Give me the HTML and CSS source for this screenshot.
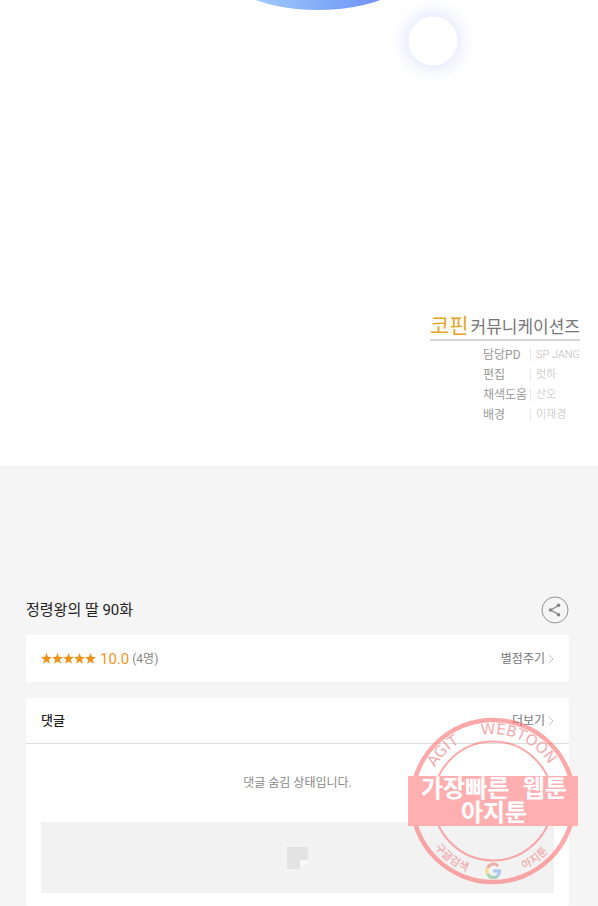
FILE: index.html
```html
<!DOCTYPE html>
<html lang="ko">
<head>
<meta charset="utf-8">
<meta name="viewport" content="width=device-width, initial-scale=1">
<title>정령왕의 딸 90화</title>
<link rel="stylesheet" href="styles.css">
</head>
<body>
<section class="episode">
  <svg class="art" viewBox="0 0 598 90" preserveAspectRatio="xMidYMin meet" aria-hidden="true">
    <defs>
      <linearGradient id="ball" x1="0.15" x2="0.85" y1="0" y2="0">
        <stop offset="0" stop-color="#a5ccfb"/>
        <stop offset="0.55" stop-color="#7fabf8"/>
        <stop offset="1" stop-color="#7390f6"/>
      </linearGradient>
      <radialGradient id="glow">
        <stop offset="0.58" stop-color="#eceffe"/>
        <stop offset="0.75" stop-color="#f7f8fe"/>
        <stop offset="1" stop-color="#ffffff"/>
      </radialGradient>
    </defs>
    <ellipse cx="318" cy="-30" rx="94" ry="40" fill="url(#ball)"/>
    <circle cx="433" cy="41" r="42" fill="url(#glow)"/>
    <circle cx="433" cy="41" r="24.5" fill="#fff"/>
  </svg>
  <div class="credits">
    <p class="studio"><strong>코핀</strong><span>커뮤니케이션즈</span></p>
    <dl class="staff">
      <dt>담당PD</dt><dd>SP JANG</dd>
      <dt>편집</dt><dd>럿하</dd>
      <dt>채색도움</dt><dd>산오</dd>
      <dt>배경</dt><dd>이재경</dd>
    </dl>
  </div>
</section>

<main class="viewer-end">
  <header class="title-row">
    <h1>정령왕의 딸 90화</h1>
    <button class="share" type="button" aria-label="공유">
      <svg viewBox="0 0 28 28" aria-hidden="true">
        <circle cx="14" cy="14" r="13" fill="none" stroke="#929292"/>
        <path d="M18 9.500 9.500 14l8.500 4.500" fill="none" stroke="#858585" stroke-width="1.2"/>
        <circle cx="17.500" cy="9.300" r="1.800" fill="#858585"/>
        <circle cx="9.500" cy="14" r="1.800" fill="#858585"/>
        <circle cx="17.500" cy="18.700" r="1.800" fill="#858585"/>
      </svg>
    </button>
  </header>

  <section class="card rating">
    <svg class="stars" viewBox="0 0 55 11" aria-hidden="true">
      <defs><path id="star" d="M5.5 0 7 3.8l4 .3-3.1 2.6 1 4L5.5 8.500 2.100 10.700l1-4L0 4.100l4-.3z"/></defs>
      <g fill="#ee951c"><use href="#star"/><use href="#star" x="11"/><use href="#star" x="22"/><use href="#star" x="33"/><use href="#star" x="44"/></g>
    </svg>
    <span class="score">10.0</span>
    <span class="count">(4명)</span>
    <a class="more" href="#">별점주기<svg viewBox="0 0 6 10" aria-hidden="true"><path d="m1 1 4 4-4 4"/></svg></a>
  </section>

  <section class="card">
    <header class="comment-head">
      <h2>댓글</h2>
      <a class="more" href="#">더보기<svg viewBox="0 0 6 10" aria-hidden="true"><path d="m1 1 4 4-4 4"/></svg></a>
    </header>
    <p class="hidden-note">댓글 숨김 상태입니다.</p>
    <div class="banner">
      <svg viewBox="0 0 21 22" aria-hidden="true"><path d="M0 0h21v13h-8v9H0z" fill="#e3e3e3"/><path d="M21 13v2l-8 7v-9z" fill="#f9f9f9"/></svg>
    </div>
    <svg class="stamp" viewBox="0 0 170 170" role="img" aria-label="아지툰">
      <defs>
        <path id="arc-top" d="M18 85a67 67 0 0 1 134 0"/>
        <path id="arc-bottom" d="M10 85a75 75 0 0 0 150 0"/>
      </defs>
      <g fill="none" stroke="#fb6f70" stroke-opacity=".6">
        <circle cx="85" cy="85" r="81" stroke-width="4.500"/>
        <circle cx="85" cy="85" r="59.500" stroke-width="2"/>
      </g>
      <g class="ring-text">
        <text><textPath href="#arc-top" startOffset="25%">AGIT</textPath></text>
        <text><textPath href="#arc-top" startOffset="63%">WEBTOON</textPath></text>
      </g>
      <g class="ring-note">
        <text><textPath href="#arc-bottom" startOffset="30%">구글검색</textPath></text>
        <text><textPath href="#arc-bottom" startOffset="70%">아지툰</textPath></text>
      </g>
      <g fill="none" stroke-width="3" opacity=".4">
        <path d="M90 150a6.500 6.500 0 0 0-10.500 2" stroke="#ea4335"/>
        <path d="M79.500 152a6.500 6.500 0 0 0 0 6" stroke="#fbbc05"/>
        <path d="M79.500 158a6.500 6.500 0 0 0 10 2" stroke="#34a853"/>
        <path d="M89.500 160a6.500 6.500 0 0 0 2-5H85" stroke="#4285f4"/>
      </g>
      <rect y="60" width="170" height="50" fill="#ffafb0"/>
      <g class="band-text">
        <text x="86" y="81">가장빠른&#160; 웹툰</text>
        <text x="86" y="105">아지툰</text>
      </g>
    </svg>
  </section>
</main>
</body>
</html>
```
FILE: styles.css
```css
* { box-sizing: border-box; }

body {
  margin: 0;
  background: #f5f5f5;
  color: #222;
  font-family: Roboto, "Noto Sans CJK KR", sans-serif;
  font-size: 12px;
  line-height: 20px;
}

h1, h2, p, dl, dd { margin: 0; }

a { color: inherit; text-decoration: none; }

.episode {
  display: flex;
  flex-direction: column;
  gap: 220px;
  padding-bottom: 41px;
  background: #fff;
}

.art { display: block; width: 100%; }

.credits {
  align-self: flex-end;
  width: 150px;
  margin-right: 18px;
}

.studio {
  display: flex;
  align-items: baseline;
  justify-content: space-between;
  height: 31px;
  border-bottom: 2px solid #d4d4d4;
  color: #777;
  font-size: 17px;
  line-height: 32px;
  white-space: nowrap;
}

.studio strong {
  color: #eaa41e;
  font-size: 21px;
  font-weight: 400;
}

.staff {
  display: grid;
  grid-template-columns: 47px auto;
  margin: 4px 0 0 53px;
  color: #999;
  white-space: nowrap;
}

.staff dd {
  display: flex;
  align-items: center;
  gap: 5px;
  color: #bbb;
  font-size: 11px;
  font-weight: 300;
}

.staff dd::before {
  width: 1px;
  height: 12px;
  background: #e8e8e8;
  content: "";
}

.viewer-end { padding: 130px 29px 0 26px; }

.title-row {
  display: flex;
  align-items: center;
  justify-content: space-between;
  margin-bottom: 11px;
}

.title-row h1 {
  font-size: 15px;
  font-weight: 400;
}

.share {
  width: 28px;
  height: 28px;
  padding: 0;
  border: 0;
  background: none;
}

.share svg { display: block; }

.card {
  position: relative;
  margin-bottom: 16px;
  border-radius: 2px;
  background: #fff;
}

.rating {
  display: flex;
  align-items: center;
  height: 47px;
  padding: 0 15px;
}

.stars {
  width: 55px;
  height: 11px;
  margin-right: 4px;
}

.score {
  margin-right: 3px;
  color: #f7931e;
  font-size: 15px;
}

.count { color: #888; }

.more {
  display: flex;
  align-items: center;
  gap: 3px;
  margin-left: auto;
  color: #777;
}

.more svg {
  width: 6px;
  height: 10px;
  fill: none;
  stroke: #c4c4c4;
}

.comment-head {
  display: flex;
  align-items: center;
  height: 46px;
  padding: 0 15px;
  border-bottom: 1px solid #ddd;
}

.comment-head h2 {
  font-size: 13px;
  font-weight: 500;
}

.hidden-note {
  padding: 29px 0;
  color: #888;
  text-align: center;
}

.card:last-child {
  margin-bottom: 0;
  padding-bottom: 13px;
}

.banner {
  display: flex;
  align-items: center;
  justify-content: center;
  height: 71px;
  margin: 0 15px;
  background: #f2f2f2;
}

.banner svg { width: 21px; height: 22px; }

.stamp {
  position: absolute;
  top: 18px;
  right: -9px;
  width: 170px;
  height: 170px;
}

.ring-text,
.ring-note {
  fill: #f08d90;
  fill-opacity: 0.75;
  text-anchor: middle;
}

.ring-text { font: 15px "DejaVu Sans", sans-serif; }

.ring-note { font: 500 11px "Noto Sans CJK KR", sans-serif; }

.band-text {
  fill: #fff;
  font: 700 24px "Noto Sans CJK KR", sans-serif;
  text-anchor: middle;
}
```
